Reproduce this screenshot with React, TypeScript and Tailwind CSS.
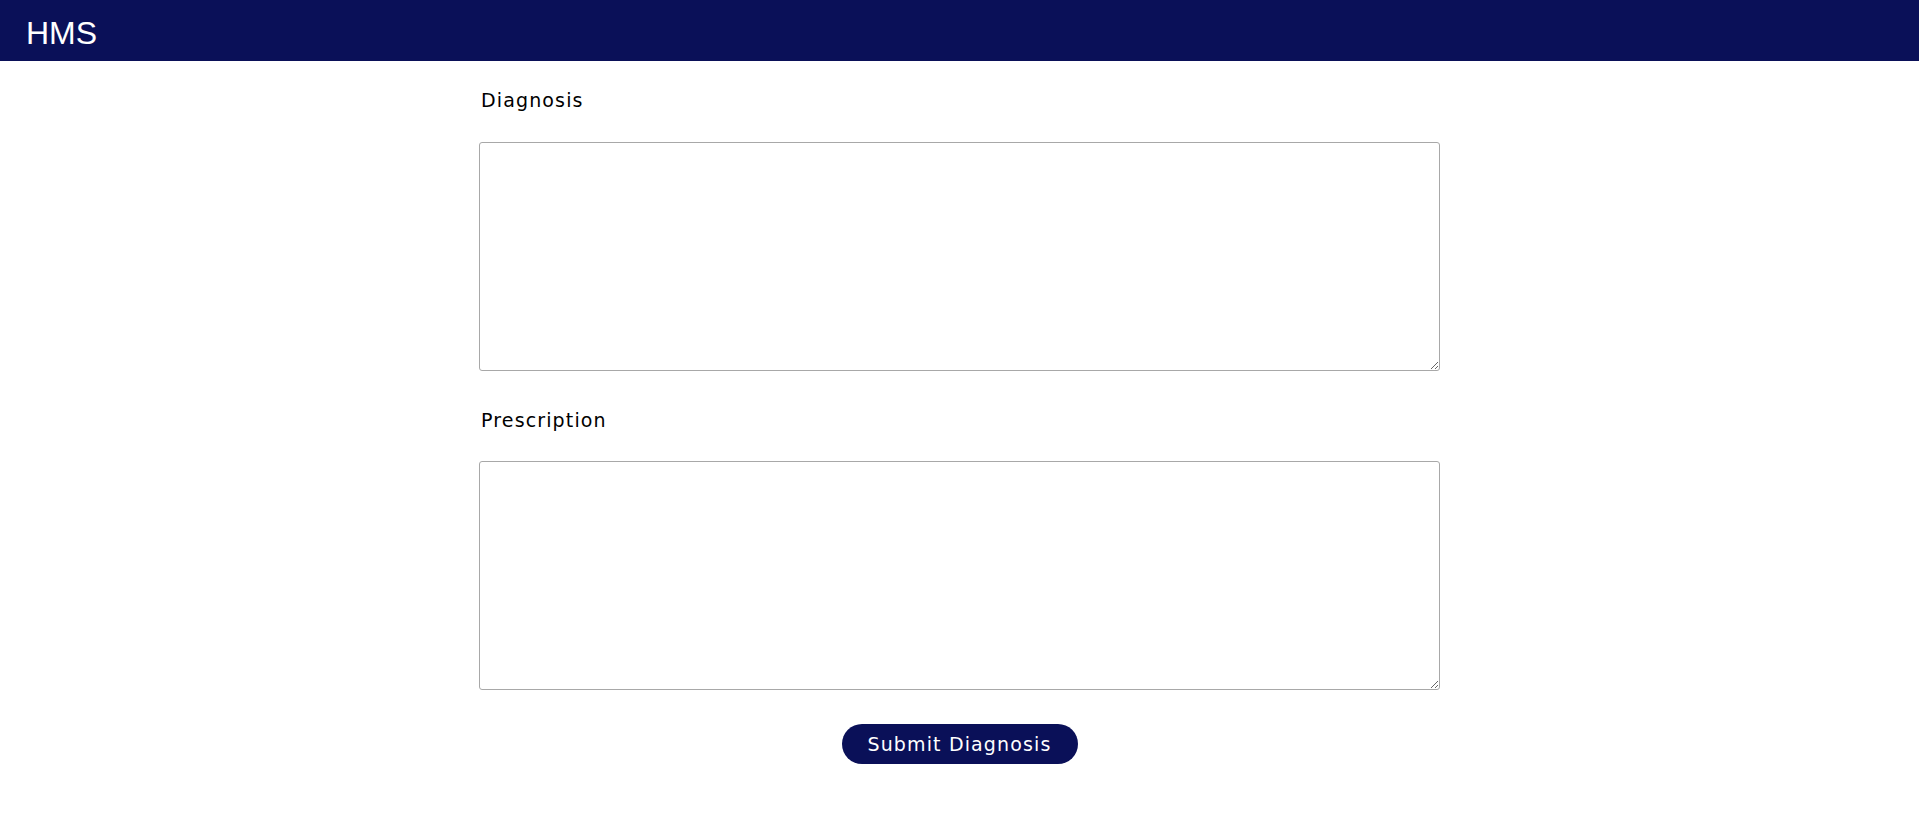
export default function App() {
  return (
    <div className="min-h-screen bg-white font-['DejaVu_Sans','Noto_Sans',sans-serif] text-black">
      <header className="h-[61px] bg-[#0a1058] px-[26px] pt-[9px]">
        <h1 className="font-['Liberation_Sans',Arial,sans-serif] text-[32px] leading-normal text-white">
          HMS
        </h1>
      </header>

      <main className="mx-auto w-[961px] pt-[25px]">
        <form className="flex flex-col" onSubmit={(e) => e.preventDefault()}>
          <label htmlFor="diagnosis" className="ml-[2px] text-[19px] leading-7 tracking-[0.06em]">
            Diagnosis
          </label>
          <textarea
            id="diagnosis"
            className="mt-[28px] h-[229px] w-full rounded-[3px] border border-[#a8a8a8] bg-white"
          />

          <label htmlFor="prescription" className="ml-[2px] mt-[35px] text-[19px] leading-7 tracking-[0.06em]">
            Prescription
          </label>
          <textarea
            id="prescription"
            className="mt-[27px] h-[229px] w-full rounded-[3px] border border-[#a8a8a8] bg-white"
          />

          <div className="mt-[34px] flex justify-center">
            <button
              type="submit"
              className="h-[40px] w-[236px] rounded-full bg-[#0a1058] text-[19px] tracking-[0.06em] text-white"
            >
              Submit Diagnosis
            </button>
          </div>
        </form>
      </main>
    </div>
  );
}
